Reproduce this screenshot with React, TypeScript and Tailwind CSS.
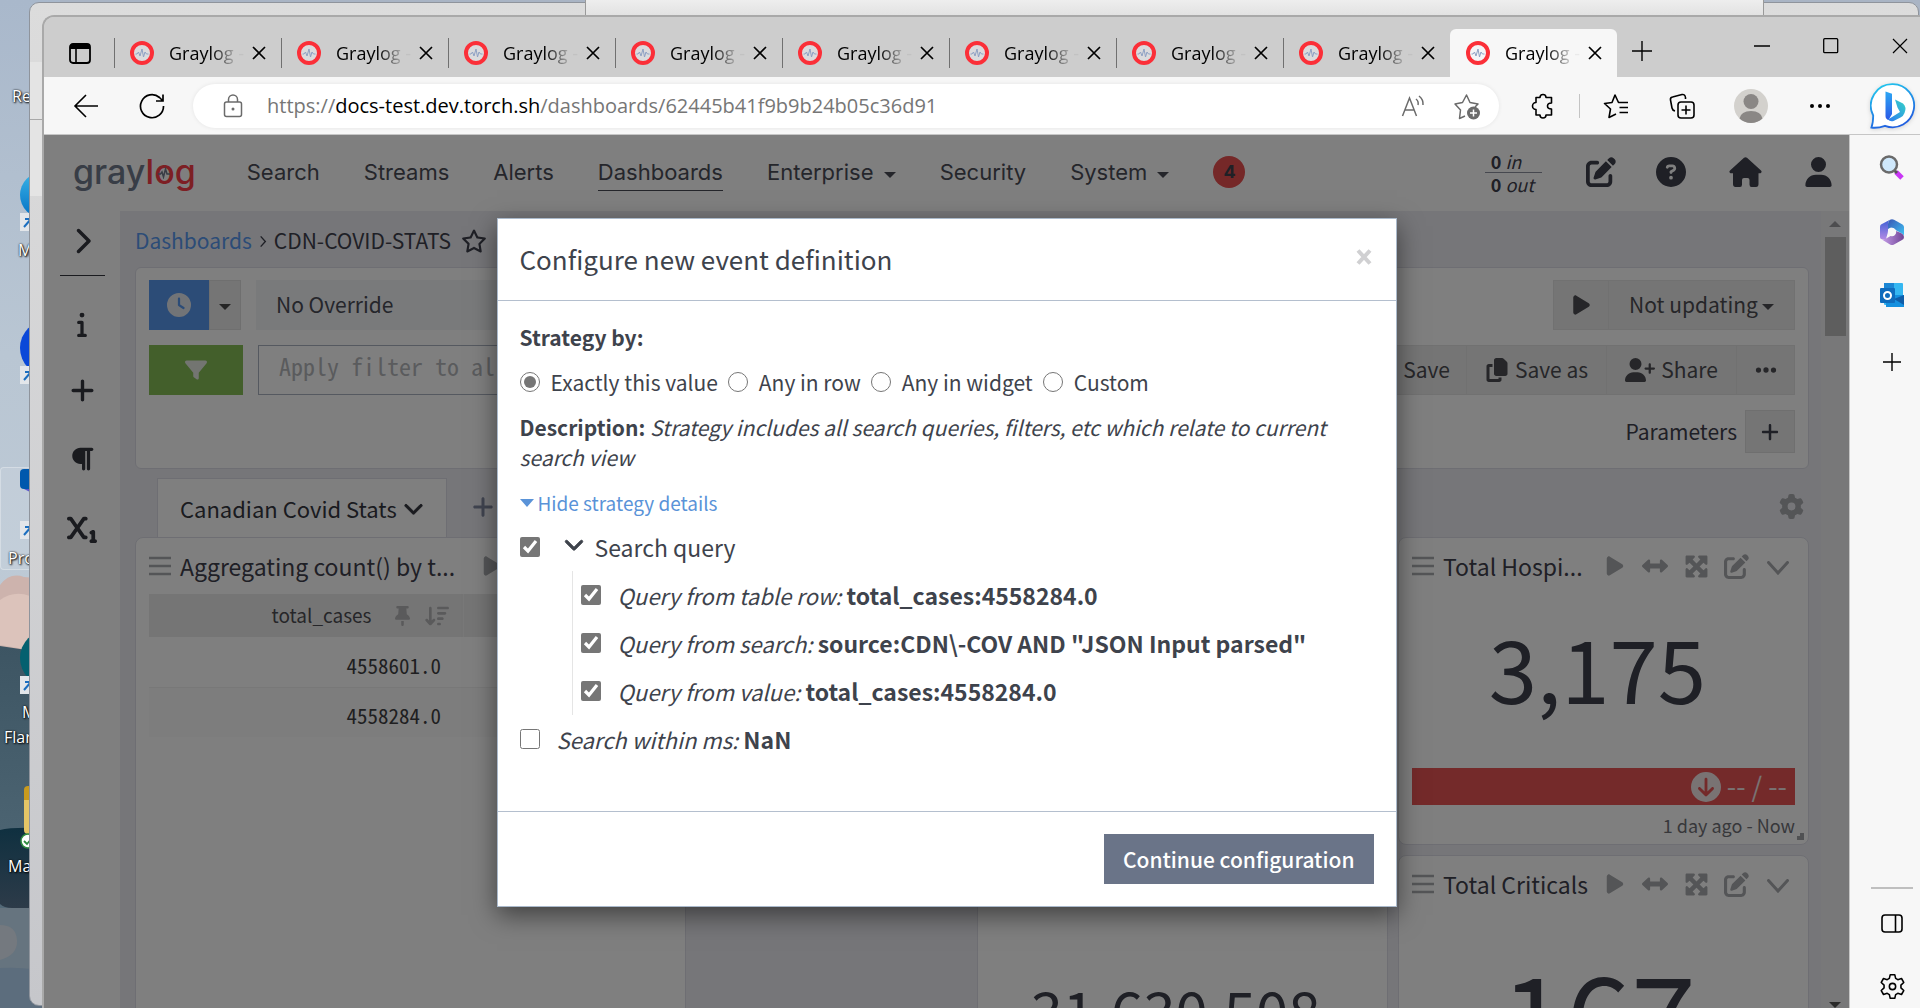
import React from "react";
import {
  FaChevronDown,
  FaChevronRight,
  FaCircleQuestion,
  FaClock,
  FaCopy,
  FaEllipsis,
  FaFilter,
  FaGear,
  FaInfo,
  FaParagraph,
  FaPlay,
  FaPlus,
  FaRegStar,
  FaSubscript,
  FaThumbtack,
  FaUser,
  FaUserPlus,
  FaCircleArrowDown,
  FaLeftRight,
  FaPenToSquare,
  FaArrowDownWideShort,
  FaMaximize,
} from "react-icons/fa6";

function Caret({ className = "" }: { className?: string }) {
  return (
    <span
      className={`inline-block h-0 w-0 border-x-[6px] border-t-[6px] border-x-transparent border-t-current ${className}`}
    />
  );
}

/* ---------- Desktop ---------- */

function Wallpaper() {
  return (
    <svg className="absolute left-0 top-0 h-full w-[60px]" viewBox="0 0 60 1008" preserveAspectRatio="none" aria-hidden="true">
      <defs>
        <linearGradient id="sky" x1="0" y1="0" x2="0" y2="1">
          <stop offset="0" stopColor="#a9b8cb" />
          <stop offset="0.35" stopColor="#b9c6d3" />
          <stop offset="1" stopColor="#c5d0da" />
        </linearGradient>
        <linearGradient id="sea" x1="0" y1="0" x2="0" y2="1">
          <stop offset="0" stopColor="#3d5563" />
          <stop offset="0.5" stopColor="#4b6371" />
          <stop offset="1" stopColor="#5d7080" />
        </linearGradient>
        <linearGradient id="lake" x1="0" y1="0" x2="0" y2="1">
          <stop offset="0" stopColor="#0f3040" />
          <stop offset="1" stopColor="#2d3b49" />
        </linearGradient>
      </defs>
      <rect width="60" height="1008" fill="url(#sky)" />
      <path d="M0 585 Q10 572 24 577 L60 580 V660 H0Z" fill="#cdb3ad" />
      <path d="M0 600 Q14 590 30 596 V650 L0 645Z" fill="#dcc3bb" />
      <path d="M0 646 L60 655 V1008 H0Z" fill="url(#sea)" />
      <path d="M0 830 Q14 826 60 829 V908 H12 Q4 908 0 904Z" fill="url(#lake)" />
      <path d="M0 908 H60 V1008 H0Z" fill="#66747f" />
      <path d="M0 925 Q16 925 17 940 Q18 955 0 960Z" fill="#74797f" />
      <path d="M0 968 Q30 966 60 975 V1008 H0Z" fill="#5c6d7d" />
    </svg>
  );
}

function ShortcutArrow({ className }: { className: string }) {
  return (
    <svg viewBox="0 0 18 18" className={`absolute left-5 h-[18px] w-[18px] ${className}`} aria-hidden="true">
      <rect width="18" height="18" fill="#e3e6ea" />
      <path d="M4 14 L11 6 M5 6 H12 V13" stroke="#1c6fc0" strokeWidth="2" fill="none" />
    </svg>
  );
}

function Desktop() {
  const label =
    "absolute whitespace-nowrap font-['Open_Sans',sans-serif] text-base leading-5 text-white [text-shadow:1px_1px_2px_#000,0_0_2px_#000]";
  return (
    <div className="absolute inset-y-0 left-0 w-[60px] overflow-hidden">
      <Wallpaper />
      <div className="absolute left-0 top-[467px] h-[103px] w-16 rounded-sm border border-white/30 bg-white/10" />
      <div className="absolute left-5 top-[172px] h-[46px] w-[50px] rounded-full bg-linear-to-b from-[#39b4e6] to-[#0070c4]" />
      <div className="absolute left-5 top-[320px] h-14 w-14 rounded-full bg-[#0a48d8]" />
      <div className="absolute left-5 top-[469px] h-5 w-8 rounded-sm bg-[#0058ad]" />
      <div className="absolute left-6 top-[489px] h-3 w-6 bg-[#5b55cf] [clip-path:polygon(0_0,100%_0,100%_100%)]" />
      <div className="absolute left-5 top-[630px] h-14 w-14 rounded-full bg-[#04606f]" />
      <div className="absolute left-6 top-[786px] h-[48px] w-8 rounded-sm border-t-[14px] border-[#c99a1d] bg-[#e5c566]" />
      <svg viewBox="0 0 16 16" className="absolute left-5 top-[833px] h-4 w-4" aria-hidden="true">
        <circle cx="8" cy="8" r="7" fill="#fff" stroke="#2d8a3e" strokeWidth="1.5" />
        <path d="M4 8 L7 11 L12 5" stroke="#2d8a3e" strokeWidth="1.8" fill="none" />
      </svg>
      <ShortcutArrow className="top-[213px]" />
      <ShortcutArrow className="top-[366px]" />
      <ShortcutArrow className="top-[521px]" />
      <ShortcutArrow className="top-[676px]" />
      <span className={`${label} left-3 top-[86px]`}>Re</span>
      <span className={`${label} left-[18px] top-[240px]`}>M</span>
      <span className={`${label} left-2 top-[548px]`}>Pro</span>
      <span className={`${label} left-[22px] top-[702px]`}>M</span>
      <span className={`${label} left-1 top-[727px]`}>Flar</span>
      <span className={`${label} left-2 top-[856px]`}>Ma</span>
    </div>
  );
}

/* ---------- Browser chrome ---------- */

function Favicon() {
  return (
    <svg viewBox="0 0 24 24" className="h-6 w-6 shrink-0" aria-hidden="true">
      <circle cx="12" cy="12" r="10" fill="#f0f0f4" fillOpacity="0.4" stroke="#fb2f38" strokeWidth="4" />
      <path d="M5.500 13h1.500l1.500-2 1.500 4 2-7 1.500 8 1.500-5 1.500 2h2" stroke="#8ea1c4" strokeWidth="1" fill="none" />
    </svg>
  );
}

function CloseGlyph({ className }: { className: string }) {
  return (
    <svg viewBox="0 0 14 14" className={className} aria-hidden="true">
      <path d="M1 1 L13 13 M13 1 L1 13" stroke="currentColor" strokeWidth="1.7" />
    </svg>
  );
}

function Tab({ active }: { active?: boolean }) {
  return (
    <div
      className={
        active
          ? "mt-3 flex h-12 w-[167px] items-center rounded-t-md bg-[#f7f7f7]"
          : "flex h-[60px] w-[167px] items-center pt-3"
      }
    >
      <span className={active ? "h-[30px] w-px" : "h-[30px] w-px bg-[#707070]"} />
      <span className="ml-[15px]"><Favicon /></span>
      <span className="ml-[15px] w-[76px] overflow-hidden whitespace-nowrap bg-linear-to-r from-black from-55% to-black/5 to-90% bg-clip-text text-lg leading-6 text-transparent">
        Graylog -
      </span>
      <button type="button" aria-label="Close tab" className="ml-[7px] text-black">
        <CloseGlyph className="h-[14px] w-[14px]" />
      </button>
    </div>
  );
}

function TabStrip() {
  return (
    <div className="flex h-[60px] shrink-0 bg-[#cdcdcd]">
      <div className="flex w-[70px] items-center pt-3 pl-[25px]">
        <svg viewBox="0 0 22 21" className="h-[21px] w-[22px]" aria-label="Tab actions">
          <rect x="1" y="1" width="20" height="19" rx="3" fill="none" stroke="#000" strokeWidth="1.8" />
          <path d="M1 6V4a3 3 0 0 1 3-3h14a3 3 0 0 1 3 3v2z" fill="#000" />
          <path d="M7 6v14" stroke="#000" strokeWidth="1.6" />
        </svg>
      </div>
      {Array.from({ length: 8 }, (_, i) => (
        <Tab key={i} />
      ))}
      <Tab active />
      <button type="button" aria-label="New tab" className="ml-[15px] mt-2 self-center">
        <svg viewBox="0 0 20 20" className="h-5 w-5">
          <path d="M10 0V20M0 10H20" stroke="#000" strokeWidth="1.4" />
        </svg>
      </button>
      <div className="ml-auto flex items-center gap-[53px] pr-3 pb-0.5">
        <button type="button" aria-label="Minimize">
          <svg viewBox="0 0 16 16" className="h-4 w-4"><path d="M0 8H16" stroke="#000" strokeWidth="1.3" /></svg>
        </button>
        <button type="button" aria-label="Maximize">
          <svg viewBox="0 0 16 16" className="h-4 w-4"><rect x="0.7" y="0.7" width="14" height="14" rx="1" fill="none" stroke="#000" strokeWidth="1.3" /></svg>
        </button>
        <button type="button" aria-label="Close">
          <svg viewBox="0 0 16 16" className="h-4 w-4"><path d="M1 1L15 15M15 1L1 15" stroke="#000" strokeWidth="1.2" /></svg>
        </button>
      </div>
    </div>
  );
}

function BingIcon() {
  return (
    <svg viewBox="0 0 46 46" className="h-[46px] w-[46px] shrink-0 drop-shadow-sm" aria-label="Bing">
      <defs>
        <linearGradient id="bingRing" x1="0" y1="0" x2="0.4" y2="1">
          <stop offset="0" stopColor="#22d0ef" />
          <stop offset="1" stopColor="#2160e0" />
        </linearGradient>
        <linearGradient id="bingStem" x1="0" y1="0" x2="0" y2="1">
          <stop offset="0" stopColor="#2ca7f4" />
          <stop offset="1" stopColor="#2a58e6" />
        </linearGradient>
        <linearGradient id="bingBowl" x1="0" y1="1" x2="1" y2="0">
          <stop offset="0" stopColor="#2c7cf2" />
          <stop offset="1" stopColor="#35d3c6" />
        </linearGradient>
      </defs>
      <path d="M23 1.200a21.500 21.500 0 1 1-8 41.600C10 44.600 5 45 1.400 44.600 2.800 41 3.200 36.500 3.200 32.500A21.500 21.500 0 0 1 23 1.200Z" fill="#fff" stroke="url(#bingRing)" strokeWidth="1.800" />
      <path d="M15.500 8.500l6.500 2.200V31l-3.500 6q-3-1-3-4z" fill="url(#bingStem)" />
      <path d="M25 16.500l8 4q4 3.500 1.500 9.500-1 3-4 4.500l-7 3.500q-3.500 1-5.500-1.500l12-7.500-2.500-4.500z" fill="url(#bingBowl)" />
    </svg>
  );
}

function Toolbar() {
  return (
    <div className="flex h-[58px] shrink-0 items-center border-b border-[#c6c6c6] bg-[#f7f7f7] pl-[29px] pr-1">
      <button type="button" aria-label="Back">
        <svg viewBox="0 0 26 24" className="h-6 w-[26px]"><path d="M25 12H2M13 1L2 12L13 23" stroke="#000" strokeWidth="1.6" fill="none" /></svg>
      </button>
      <button type="button" aria-label="Refresh" className="ml-10">
        <svg viewBox="0 0 26 26" className="h-[26px] w-[26px]">
          <path d="M24.500 13A11.500 11.500 0 1 1 20.500 4.500L24 8M24 1.500V8H17" stroke="#000" strokeWidth="1.7" fill="none" />
        </svg>
      </button>
      <div className="ml-7 flex h-11 flex-1 items-center rounded-full bg-white pl-[30px] pr-[18px] shadow-[0_0_4px_rgba(0,0,0,0.08)]">
        <svg viewBox="0 0 20 24" className="mr-[24px] h-6 w-5 shrink-0 text-[#6b6b6b]" aria-hidden="true">
          <rect x="1.500" y="8" width="17" height="14.500" rx="2" fill="none" stroke="currentColor" strokeWidth="1.500" />
          <path d="M5.500 8V5.500a4.500 4.500 0 0 1 9 0V8" fill="none" stroke="currentColor" strokeWidth="1.500" />
          <circle cx="10" cy="15" r="1.500" fill="currentColor" />
        </svg>
        <a href="#url" className="whitespace-nowrap text-xl leading-7 text-[#767676]">
          https://<span className="text-black">docs-test.dev.torch.sh</span>/dashboards/62445b41f9b9b24b05c36d91
        </a>
        <svg viewBox="0 0 26 26" className="ml-auto h-[26px] w-[26px] text-[#6b6b6b]" aria-hidden="true">
          <path d="M1.500 23L8.500 5L15.500 23M4 17H13M15 6a6 6 0 0 1 2 6M18 3a10 10 0 0 1 4 9" stroke="currentColor" strokeWidth="1.500" fill="none" />
        </svg>
        <svg viewBox="0 0 28 28" className="ml-[26px] h-7 w-7 text-[#6b6b6b]" aria-hidden="true">
          <path d="M12 24L6.500 26.500L7.500 18L2 12L9.500 10.500L13.500 3L17 10.500L25 12L22 15" stroke="currentColor" strokeWidth="1.500" fill="none" strokeLinejoin="round" />
          <circle cx="20.500" cy="21" r="6.500" fill="currentColor" />
          <path d="M20.500 17.500v7M17 21h7" stroke="#fff" strokeWidth="1.500" />
        </svg>
      </div>
      <svg viewBox="0 0 26 26" className="ml-[30px] h-[26px] w-[26px]" aria-hidden="true">
        <path d="M7 4.500h4a3 3 0 0 1 6 0h5.500v5.500q-4 0-4 3t4 3v6h-5.500a3 3 0 0 1-6 0H7v-5.500a3.500 3.500 0 0 1 0-7z" stroke="#000" strokeWidth="1.600" fill="none" strokeLinejoin="round" />
      </svg>
      <span className="ml-6 h-6 w-px bg-[#c4c4c4]" />
      <svg viewBox="0 0 26 26" className="ml-[23px] h-[26px] w-[26px]" aria-hidden="true">
        <path d="M13 21L6 24.500L7.500 16L1.500 10.500L9 9.500L12 2L15.500 9.500H25M16.500 14.500H25M16.500 19.500H25" stroke="#000" strokeWidth="1.600" fill="none" strokeLinejoin="round" />
      </svg>
      <svg viewBox="0 0 26 26" className="ml-10 h-[26px] w-[26px]" aria-hidden="true">
        <rect x="9" y="9" width="16" height="16" rx="3" stroke="#000" strokeWidth="1.600" fill="none" />
        <path d="M17 12.500v9M12.500 17h9M6 18Q3.500 17.500 3 15L1.500 7Q1 4.500 3.500 4L13 1.500Q16 1 16.500 4.500V6" stroke="#000" strokeWidth="1.600" fill="none" />
      </svg>
      <svg viewBox="0 0 34 34" className="ml-[39px] h-[34px] w-[34px]" aria-label="Profile">
        <circle cx="17" cy="17" r="17" fill="#d3d1cd" />
        <circle cx="17" cy="12.500" r="7.500" fill="#8a8785" />
        <path d="M5.500 29.500Q7 22 17 22T28.500 29.500A17 17 0 0 1 5.500 29.500Z" fill="#8a8785" />
      </svg>
      <button type="button" aria-label="Settings and more" className="ml-[41px]">
        <svg viewBox="0 0 22 6" className="h-[6px] w-[22px]"><circle cx="3" cy="3" r="2" /><circle cx="11" cy="3" r="2" /><circle cx="19" cy="3" r="2" /></svg>
      </button>
      <span className="ml-[39px]"><BingIcon /></span>
    </div>
  );
}

function EdgeSidebar() {
  return (
    <aside className="flex w-[71px] shrink-0 flex-col items-center border-l border-[#c6c6c6] bg-[#f7f7f7] pl-3.5 pt-5 pb-2">
      <svg viewBox="0 0 26 26" className="h-[26px] w-[26px]" aria-label="Search">
        <path d="M17 17L23 23" stroke="#c936f5" strokeWidth="5" />
        <path d="M14 14L18 18" stroke="#555" strokeWidth="3" />
        <circle cx="10" cy="9.500" r="8" fill="#cfe8fb" stroke="#6a6a6a" strokeWidth="2.500" />
      </svg>
      <svg viewBox="0 0 24 26" className="mt-[38px] h-[26px] w-6" aria-label="Microsoft 365">
        <defs>
          <linearGradient id="m365a" x1="0" y1="0" x2="0" y2="1">
            <stop offset="0" stopColor="#3e5fd6" />
            <stop offset="1" stopColor="#b08ae4" />
          </linearGradient>
          <linearGradient id="m365b" x1="0" y1="0" x2="1" y2="1">
            <stop offset="0" stopColor="#3a56b4" />
            <stop offset="1" stopColor="#3ec4f5" />
          </linearGradient>
          <linearGradient id="m365c" x1="0" y1="0" x2="1" y2="0">
            <stop offset="0" stopColor="#c9a2ec" />
            <stop offset="1" stopColor="#6f4395" />
          </linearGradient>
        </defs>
        <path d="M1 5.500L10 .7Q8 2 8 5V13L6 20 1 20Q0 19.500 0 18V8Q0 6.300 1 5.500Z" fill="url(#m365a)" />
        <path d="M10 .7Q12-.4 14 .7L22.500 5.500Q24 6.500 24 8V17Q23.500 15 21 14L11 8.500 8 10V5Q8 2 10 .7Z" fill="url(#m365b)" />
        <path d="M1 20Q4 21 7 19L16 14 16 12 21 14Q24 15.500 24 18T22 21L14 25.500Q12 26.500 10 25.500Z" fill="url(#m365c)" />
        <circle cx="12" cy="13" r="4.200" fill="#f7f7f7" />
      </svg>
      <svg viewBox="0 0 24 24" className="mt-[38px] h-6 w-6" aria-label="Outlook">
        <rect x="4" y="0" width="19" height="22" rx="1" fill="#35b7f1" />
        <rect x="4" y="0" width="10" height="9" fill="#1b86d4" />
        <path d="M6 12L24 12V24H6Z" fill="#1490df" />
        <path d="M24 12V22L14 16Z" fill="#0f5da8" />
        <rect x="0" y="5" width="15" height="15" rx="1" fill="#0f6cbd" />
        <circle cx="7.500" cy="12.500" r="3.500" fill="none" stroke="#fff" strokeWidth="2" />
      </svg>
      <button type="button" aria-label="Add" className="mt-[46px]">
        <svg viewBox="0 0 18 18" className="h-[18px] w-[18px]"><path d="M9 0V18M0 9H18" stroke="#000" strokeWidth="1.400" /></svg>
      </button>
      <span className="mt-auto h-0.5 w-[42px] bg-[#bfbfbf]" />
      <svg viewBox="0 0 22 20" className="mt-[25px] h-5 w-[22px]" aria-label="Hide sidebar">
        <rect x="1" y="1" width="20" height="17" rx="3" fill="none" stroke="#000" strokeWidth="1.600" />
        <path d="M14.500 1v17" stroke="#000" strokeWidth="1.600" />
      </svg>
      <svg viewBox="0 0 24 24" className="mt-[39px] h-[27px] w-[27px]" fill="none" stroke="#000" strokeWidth="1.400" strokeLinejoin="round" aria-label="Settings">
        <path d="M10 1.500h4l.8 3.300 1.900 1.100 3.300-1 2 3.500-2.500 2.400v2.400l2.500 2.400-2 3.500-3.300-1-1.900 1.100-.8 3.300h-4l-.8-3.300-1.900-1.100-3.300 1-2-3.500 2.500-2.400v-2.400L2 8.400l2-3.500 3.300 1 1.900-1.100z" />
        <circle cx="12" cy="12" r="2.800" />
      </svg>
    </aside>
  );
}

/* ---------- Graylog page ---------- */

function Logo() {
  return (
    <a href="#home" className="block font-['Inter',sans-serif] text-[34px] font-medium leading-10 text-[#707a8c]">
      gray
      <span className="text-[#fb3e48]">
        l
        <span className="relative">
          o
          <svg viewBox="0 0 12 12" className="absolute bottom-[13px] left-1 h-3 w-3" aria-hidden="true">
            <path d="M0 7h2.500l1.500-2 1.500 5L7.500 2 9 7h3" stroke="#707a8c" strokeWidth="1.500" fill="none" />
          </svg>
        </span>
        g
      </span>
    </a>
  );
}

function HomeIcon() {
  return (
    <svg viewBox="0 0 33 30" className="h-[30px] w-[33px]" fill="currentColor" aria-label="Home">
      <path d="M15 .8q1.500-1.300 3 0L32 13.500q1.500 1.700-.5 2.800H29.500V27q0 3-2.500 3H22.500q-2 0-2-2.500V23q0-2-2-2h-3.500q-2 0-2 2v4.500q0 2.500-2 2.500H6.500q-2.500 0-2.500-3V16.300H1.500q-2-1.100-.5-2.800z" />
    </svg>
  );
}

function NavBar() {
  const link = "leading-9";
  return (
    <nav className="flex h-[76px] shrink-0 items-center bg-white pb-0.5 pl-[29px] pr-[17px] text-[#4b4d57]">
      <Logo />
      <div className="ml-[51px] flex items-center gap-[44px] font-['Inter',sans-serif] text-[22px]">
        <a href="#search" className={link}>Search</a>
        <a href="#streams" className={link}>Streams</a>
        <a href="#alerts" className={link}>Alerts</a>
        <a href="#dashboards" className="border-b border-current leading-9">Dashboards</a>
        <a href="#enterprise" className={link}>Enterprise <Caret className="ml-1 mb-0.5" /></a>
        <a href="#security" className={link}>Security</a>
        <a href="#system" className={link}>System <Caret className="ml-1 mb-0.5" /></a>
        <span className="grid h-8 w-8 place-items-center rounded-full bg-[#ea5050] text-lg font-bold text-[#3e404c]">4</span>
      </div>
      <div className="ml-auto flex items-center text-[#3e404c]">
        <div className="mr-11 text-lg leading-[22px]">
          <div className="border-b border-[#8d909f] pl-1.5"><b>0</b> <i>in</i></div>
          <div className="pl-1.5 pr-2"><b>0</b> <i>out</i></div>
        </div>
        <FaPenToSquare className="h-[30px] w-[30px]" />
        <FaCircleQuestion className="ml-10 h-[30px] w-[30px]" />
        <span className="ml-[43px]"><HomeIcon /></span>
        <FaUser className="ml-[43px] h-[30px] w-[27px]" />
      </div>
    </nav>
  );
}

function SideRail() {
  return (
    <aside className="flex w-[76px] shrink-0 flex-col items-center bg-white pt-4 text-[#34363f]">
      <FaChevronRight className="h-[28px] w-[20px]" />
      <span className="mt-5 h-px w-[45px] bg-current" />
      <FaInfo className="mt-[35px] h-[26px]" />
      <FaPlus className="mt-10 h-[27px] w-[27px]" />
      <FaParagraph className="mt-[42px] h-[26px] w-[26px]" />
      <FaSubscript className="mt-[41px] h-[30px] w-[30px]" />
    </aside>
  );
}

const grayBtn = "flex h-[50px] items-center border border-[#e2e2e2] bg-[#ebebeb] text-[#4d4d52]";
const mono = "font-['Noto_Sans_Mono_CJK_KR','Noto_Sans_Mono_CJK_SC','Liberation_Mono',monospace]";

function QueryPanel() {
  return (
    <section className="flex h-[202px] shrink-0 flex-col rounded-md border border-[#dcdde6] bg-white px-[13px] pt-3">
      <div className="flex h-[50px]">
        <button type="button" aria-label="Time range" className="grid w-[60px] place-items-center bg-[#5898ee] text-[#e4e8ee]">
          <FaClock className="h-6 w-6" />
        </button>
        <button type="button" aria-label="Time range presets" className="grid w-8 place-items-center border border-[#dedede] bg-[#ebebeb] text-[#4a4a4a]">
          <Caret className="mt-1" />
        </button>
        <div className="ml-[15px] w-[700px] bg-[#f3f4f7] pl-5 text-[21px] leading-[48px]">No Override</div>
        <div className="ml-auto flex">
          <button type="button" aria-label="Play" className={`${grayBtn} w-[56px] justify-center`}>
            <FaPlay className="h-[22px] w-[19px]" />
          </button>
          <button type="button" className={`${grayBtn} w-[186px] justify-center border-l-0 text-[21px]`}>
            Not updating <Caret className="ml-1 mt-1" />
          </button>
        </div>
      </div>
      <div className="mt-[15px] flex h-[50px]">
        <button type="button" aria-label="Perform search" className="grid w-[94px] place-items-center bg-[#86be56] text-[#e6ebe2]">
          <FaFilter className="h-[22px] w-6" />
        </button>
        <input
          aria-label="Filter"
          placeholder="Apply filter to all"
          className={`ml-[15px] flex-1 border border-[#aab3c0] bg-white pb-2 pl-5 text-2xl placeholder:text-[#b5b7bb] ${mono}`}
        />
        <div className="ml-4 flex text-[21px]">
          <button type="button" className={`${grayBtn} w-[120px] justify-end pr-4`}>Save</button>
          <button type="button" className={`${grayBtn} w-[140px] justify-center gap-1.5 border-l-0`}>
            <FaCopy className="h-6 w-6" /> Save as
          </button>
          <button type="button" className={`${grayBtn} w-[130px] justify-center gap-1.5 border-l-0`}>
            <FaUserPlus className="h-6 w-[30px]" /> Share
          </button>
          <button type="button" aria-label="More actions" className={`${grayBtn} w-[58px] justify-center border-l-0`}>
            <FaEllipsis className="h-6 w-6" />
          </button>
        </div>
      </div>
      <div className="mt-[15px] flex items-center justify-end gap-2 text-[21px] text-[#3e404c]">
        Parameters
        <button type="button" aria-label="Add parameter" className="grid h-[43px] w-[50px] place-items-center border border-[#dedede] bg-[#ebebeb]">
          <FaPlus className="h-5 w-5" />
        </button>
      </div>
    </section>
  );
}

function WidgetHeader({ title, hideTools, className = "" }: { title: string; hideTools?: boolean; className?: string }) {
  return (
    <header className={`flex items-center text-[#a9abae] ${className}`}>
      <svg viewBox="0 0 22 20" className="h-5 w-[22px] shrink-0" aria-hidden="true">
        <path d="M0 2H22M0 10H22M0 18H22" stroke="#a9abae" strokeWidth="2.500" strokeLinecap="round" />
      </svg>
      <h2 className="ml-[9px] flex-1 whitespace-nowrap text-[23px] leading-8 text-[#3e404c]">{title}</h2>
      <span className="ml-4 flex shrink-0 items-center">
        <FaPlay className="h-[22px] w-5" />
        {!hideTools && (
          <>
            <FaLeftRight className="ml-[17px] h-[26px] w-[26px]" />
            <FaMaximize className="ml-4 h-[25px] w-[25px]" />
            <FaPenToSquare className="ml-[15px] h-[25px] w-[25px]" />
            <svg viewBox="0 0 22 14" className="ml-[18px] mt-1 h-[14px] w-[22px]" aria-hidden="true">
              <path d="M1.500 1.500L11 12L20.500 1.500" stroke="currentColor" strokeWidth="3" fill="none" strokeLinecap="round" />
            </svg>
          </>
        )}
      </span>
    </header>
  );
}

const card = "rounded-lg border border-[#dcdde6] bg-white px-[13px]";

function AggregationWidget() {
  return (
    <section className={`${card} col-span-4 row-span-2`}>
      <div className="flex pt-3">
        <WidgetHeader title="Aggregating count() by t..." hideTools className="w-[353px]" />
      </div>
      <table className="mt-3 w-full border-collapse">
        <thead>
          <tr className="h-[43px] bg-[#ebebeb] text-[#4d4d52]">
            <th scope="col" className="w-[314px] border-r border-[#f2f2f2] pr-3.5 font-normal">
              <span className="flex items-center justify-end text-[19px]">
                total_cases
                <FaThumbtack className="ml-[22px] h-5 w-[17px] text-[#b4b4b6]" />
                <FaArrowDownWideShort className="ml-3.5 h-6 w-6 text-[#b4b4b6]" />
              </span>
            </th>
            <th scope="col" />
          </tr>
        </thead>
        <tbody className={`text-[21px] leading-6 text-[#3f3f42] ${mono}`}>
          <tr className="h-[50px]">
            <td className="pr-[22px] pt-1.5 text-right">4558601.0</td>
            <td />
          </tr>
          <tr className="h-[50px] border-t border-[#f0f0f0] bg-[#fafafa]">
            <td className="pr-[22px] pt-1.5 text-right">4558284.0</td>
            <td />
          </tr>
        </tbody>
      </table>
    </section>
  );
}

function Dashboard() {
  return (
    <div className="flex min-w-0 flex-1 flex-col bg-[#ededf3] pl-[15px] pr-3 pt-3">
      <div className="mb-2 flex h-9 shrink-0 items-center text-[21px] text-[#3e404c]">
        <a href="#dashboards" className="text-[#5898ee]">Dashboards</a>
        <svg viewBox="0 0 8 14" className="mx-[7px] h-[13px] w-2" aria-hidden="true">
          <path d="M1.500 1.500L6.500 7L1.500 12.500" stroke="currentColor" strokeWidth="1.500" fill="none" />
        </svg>
        CDN-COVID-STATS
        <FaRegStar className="ml-2.5 h-6 w-[26px]" />
      </div>
      <QueryPanel />
      <div className="flex h-[68px] shrink-0 items-end pr-[5px]">
        <div className="ml-[22px] flex h-[59px] items-center border border-b-0 border-[#dcdde6] bg-white px-[22px] text-[22px] text-[#34363f]">
          Canadian Covid Stats
          <FaChevronDown className="ml-1.5 h-5 w-[21px] stroke-current [stroke-width:20px]" />
        </div>
        <FaPlus className="mb-[18px] ml-6 h-6 w-6 text-[#8189a0]" />
        <FaGear className="mb-[18px] ml-auto h-[25px] w-[25px] text-[#a9abae]" />
      </div>
      <div className="grid flex-1 grid-cols-12 grid-rows-[308px_1fr] gap-[10px]">
        <AggregationWidget />
        <section className={`${card} col-span-3 col-start-7 row-span-2 pt-[431px] text-center`}>
          <p className="pr-3.5 text-[58px] leading-[80px] text-[#3e404c]">31,630,508</p>
        </section>
        <section className={`${card} relative col-span-3 col-start-10 pt-3`}>
          <WidgetHeader title="Total Hospi..." className="pr-[6px]" />
          <p className="mt-[34px] pr-3 text-center text-[87px] leading-[100px] text-[#3e404c]">3,175</p>
          <div className="mt-[52px] flex h-[37px] items-center justify-end gap-1.5 bg-[#e85454] pr-2 text-[27px] text-[#f3e6e6]">
            <FaCircleArrowDown className="h-[30px] w-[30px]" />
            -- / --
          </div>
          <p className="mt-1.5 text-right text-lg leading-7 text-[#6f7076]">1 day ago - Now</p>
          <span className="absolute bottom-1 right-1 h-[7px] w-[7px] border-b-4 border-r-4 border-[#a0a2a6]" />
        </section>
        <section className={`${card} col-span-3 col-start-10 overflow-hidden pt-3`}>
          <WidgetHeader title="Total Criticals" className="pr-[6px]" />
          <p className="mt-[43px] pr-2.5 text-center text-[117px] leading-[136px] text-[#3e404c]">167</p>
        </section>
      </div>
    </div>
  );
}

function ScrollBar() {
  return (
    <div className="flex w-[28px] shrink-0 flex-col items-center justify-between bg-[#f0f0f2] pt-2.5">
      <div className="flex flex-col items-center">
        <span className="h-0 w-0 border-x-[6px] border-b-[6px] border-x-transparent border-b-[#9a9a9e]" />
        <span className="mt-2.5 h-[99px] w-[21px] bg-[#bcbcbc]" />
      </div>
      <Caret className="h-1 text-[#555]" />
    </div>
  );
}

/* ---------- Dialog ---------- */

function RadioOption({ id, label, defaultChecked }: { id: string; label: string; defaultChecked?: boolean }) {
  return (
    <span className="flex items-center">
      <input id={id} type="radio" name="strategy" defaultChecked={defaultChecked} className="h-5 w-5 accent-[#767676]" />
      <label htmlFor={id} className="ml-[11px]">{label}</label>
    </span>
  );
}

function CheckRow({ id, label, value, checked }: { id: string; label: string; value: string; checked?: boolean }) {
  return (
    <div className="flex h-12 items-center text-[23px]">
      <input id={id} type="checkbox" defaultChecked={checked} className="h-5 w-5 accent-[#767676]" />
      <label htmlFor={id} className="ml-[17px] whitespace-nowrap">
        <i className="text-[22px]">{label}</i> <b>{value}</b>
      </label>
    </div>
  );
}

function EventDialog() {
  return (
    <div
      role="dialog"
      aria-labelledby="dialog-title"
      className="w-[900px] border border-[#aab9cb] bg-white text-[21px] leading-[30px] text-[#3e434c] shadow-[0_8px_24px_rgba(0,0,0,0.5)]"
    >
      <header className="flex h-[82px] items-center justify-between border-b border-[#b4bfce] px-[22px] pb-0.5">
        <h1 id="dialog-title" className="text-[26px]">Configure new event definition</h1>
        <button type="button" aria-label="Close dialog" className="mb-1 mr-0.5 text-[#d0d0d2]">
          <svg viewBox="0 0 16 16" className="h-4 w-4"><path d="M2 1.500L14 14.500M14 1.500L2 14.500" stroke="currentColor" strokeWidth="4" /></svg>
        </button>
      </header>
      <div className="px-[22px] pb-12 pt-[21px]">
        <p className="font-bold">Strategy by:</p>
        <div className="mt-[15px] flex gap-2.5">
          <RadioOption id="exact" label="Exactly this value" defaultChecked />
          <RadioOption id="row" label="Any in row" />
          <RadioOption id="widget" label="Any in widget" />
          <RadioOption id="custom" label="Custom" />
        </div>
        <p className="mt-[15px]">
          <b>Description:</b>{" "}
          <i>Strategy includes all search queries, filters, etc which relate to current search view</i>
        </p>
        <button type="button" className="mt-4 flex items-center gap-1 text-[19px] leading-[30px] text-[#5a93d8]">
          <span className="h-0 w-0 border-x-[7px] border-t-8 border-x-transparent border-t-current" />
          Hide strategy details
        </button>
        <div className="mt-[5px] flex h-12 items-center text-[23px]">
          <input id="query" type="checkbox" defaultChecked className="h-5 w-5 accent-[#767676]" />
          <FaChevronDown className="ml-6 mb-1.5 h-5 w-5 stroke-current [stroke-width:24px]" />
          <label htmlFor="query" className="ml-[11px]">Search query</label>
        </div>
        <div className="ml-[52px] border-l border-[#e5e5e5] pl-2">
          <CheckRow id="q-row" label="Query from table row:" value="total_cases:4558284.0" checked />
          <CheckRow id="q-search" label="Query from search:" value={'source:CDN\\-COV AND "JSON Input parsed"'} checked />
          <CheckRow id="q-value" label="Query from value:" value="total_cases:4558284.0" checked />
        </div>
        <CheckRow id="within" label="Search within ms:" value="NaN" />
      </div>
      <footer className="flex justify-end border-t border-[#b4bfce] px-[22px] py-[22px]">
        <button type="button" className="h-[50px] bg-[#6a7488] px-[19px] font-medium text-white">
          Continue configuration
        </button>
      </footer>
    </div>
  );
}

export default function App() {
  return (
    <div className="relative h-screen w-full overflow-hidden bg-[#a9b4c4] font-['Open_Sans',sans-serif]">
      <Desktop />
      <div className="absolute bottom-0.5 left-[29px] right-px top-0.5 rounded-[10px] border border-[#8f949c] bg-linear-to-b from-[#dcdcdc] to-[#c6c7cb]">
        <div className="mt-[59px] h-[134px] bg-[#e4e4e4]">
          <div className="h-[58px] border-b border-[#a8a8a8]" />
        </div>
      </div>
      <div className="absolute left-[585px] right-[156px] top-0 h-10 border-x border-[#9a9a9a] bg-linear-to-b from-[#eeeeee] to-[#cfcfcf]" />
      <main className="absolute inset-y-0 left-[42px] right-0 top-[15px] flex flex-col overflow-hidden rounded-tl-xl border-l-2 border-t-2 border-[#a9a9a9]">
        <TabStrip />
        <Toolbar />
        <div className="flex min-h-0 flex-1">
          <div className="relative flex min-w-0 flex-1 flex-col overflow-hidden font-['Noto_Sans_CJK_KR','Noto_Sans',sans-serif] text-[#4b4d57]">
            <NavBar />
            <div className="flex min-h-0 flex-1 overflow-hidden">
              <SideRail />
              <Dashboard />
              <ScrollBar />
            </div>
            <div className="absolute inset-0 flex items-start justify-center bg-black/50 pt-[83px]">
              <EventDialog />
            </div>
          </div>
          <EdgeSidebar />
        </div>
      </main>
    </div>
  );
}
